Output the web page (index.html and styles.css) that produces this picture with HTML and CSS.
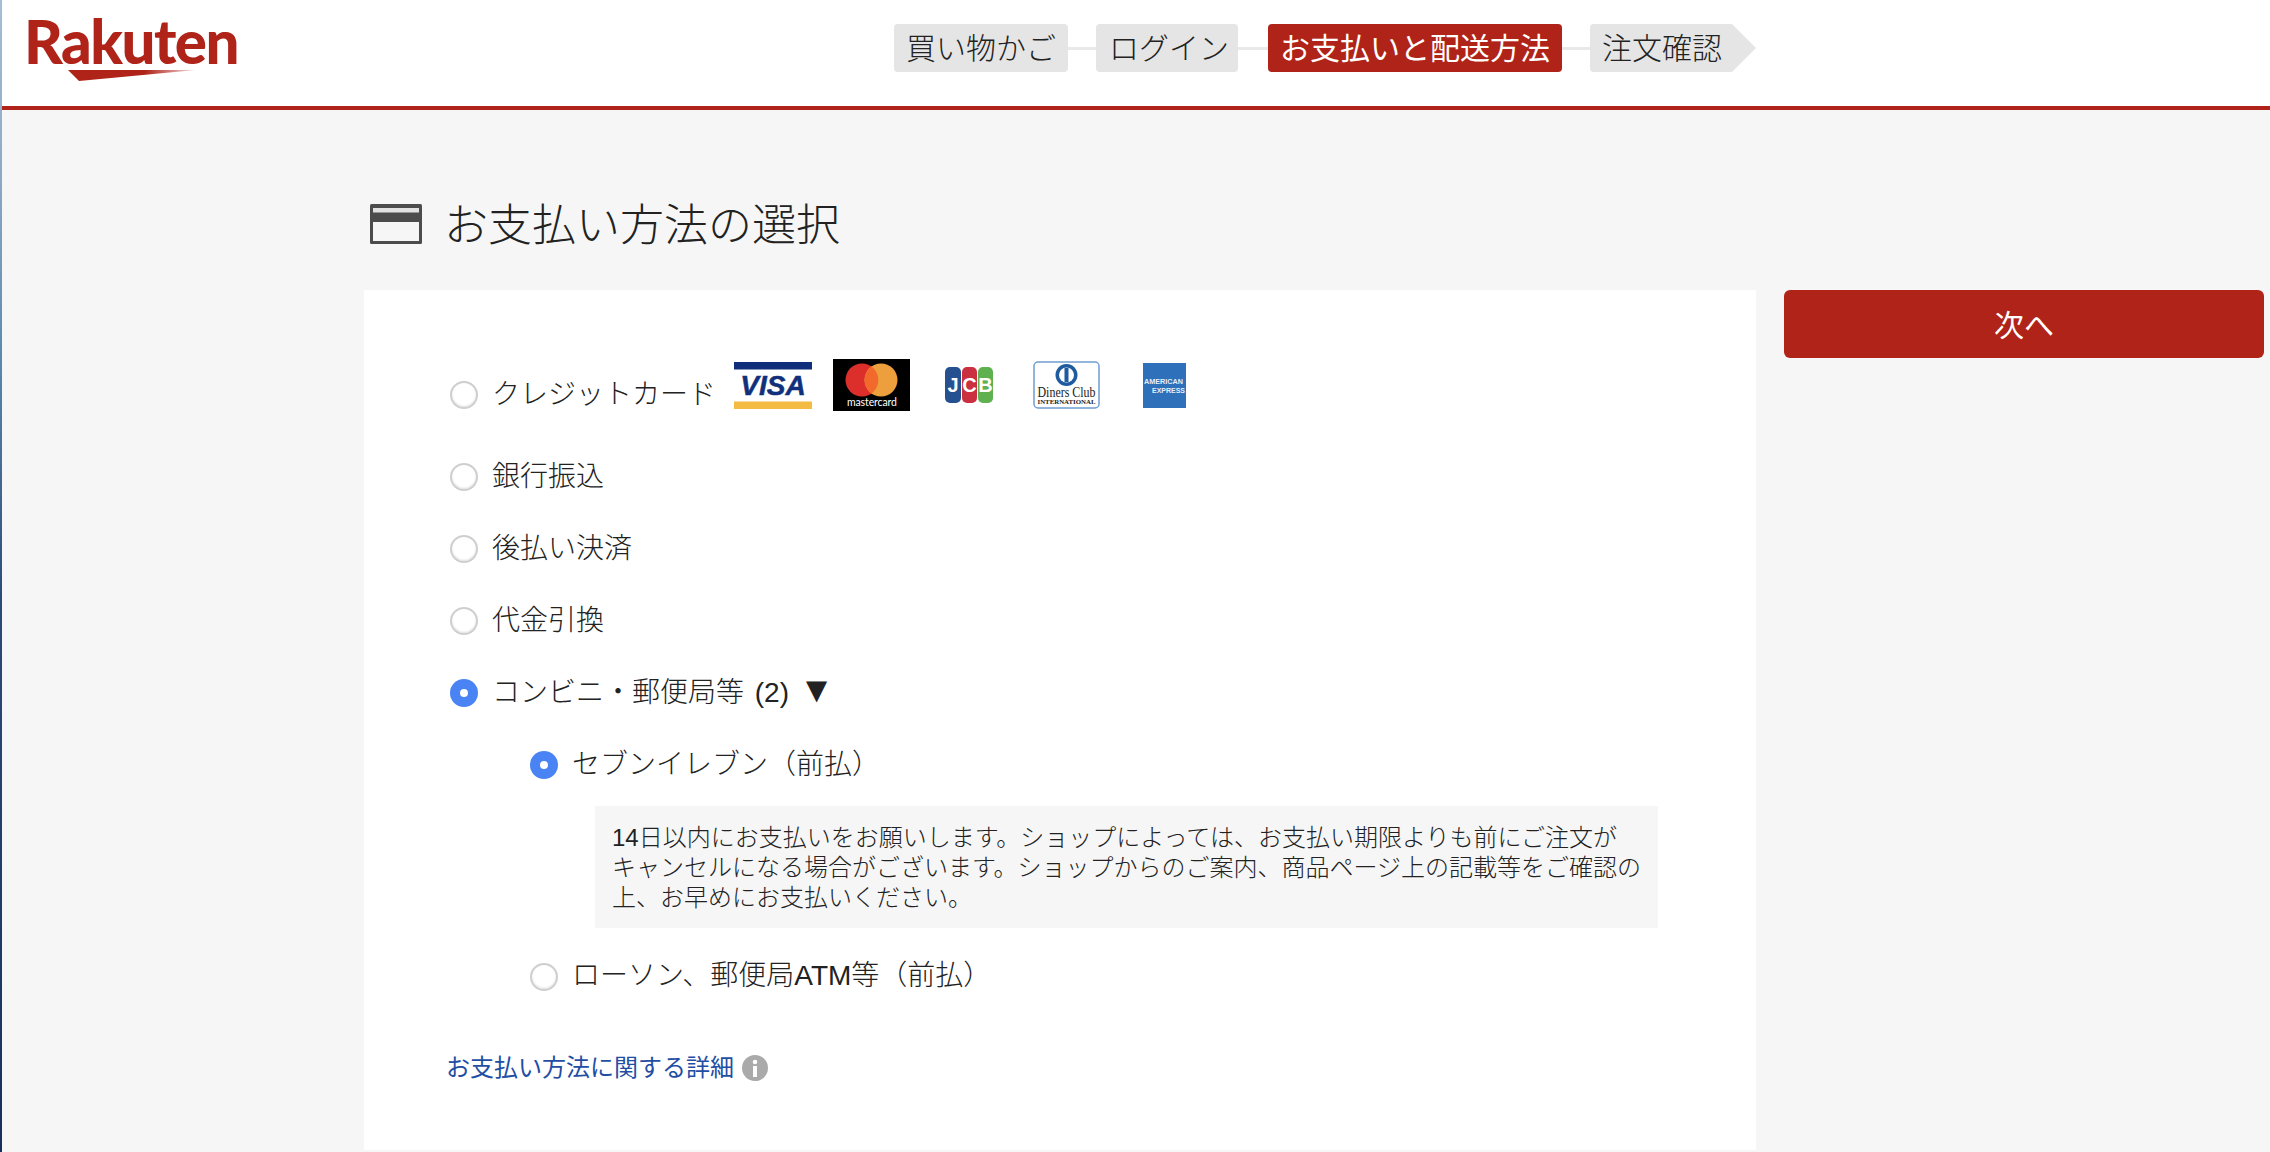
FILE: index.html
```html
<!DOCTYPE html>
<html lang="ja">
<head>
<meta charset="utf-8">
<title>お支払い方法の選択</title>
<link rel="stylesheet" href="styles.css">
</head>
<body>
<div class="page">
  <div class="edge"></div>
  <div class="frame">
    <header class="header">
      <div class="logo">
        <span class="logo-word">Rakuten</span>
        <svg class="logo-swoosh" width="170" height="12" viewBox="0 0 170 12">
          <defs><linearGradient id="sw" x1="0" x2="1" y1="0" y2="0"><stop offset="0.6" stop-color="#b02318"/><stop offset="1" stop-color="#b02318" stop-opacity="0.15"/></linearGradient></defs>
          <polygon points="0,0 128,0 11,11" fill="url(#sw)"/>
        </svg>
      </div>
      <nav class="steps">
        <span class="step">買い物かご</span>
        <span class="link-line"></span>
        <span class="step step-login">ログイン</span>
        <span class="link-line link-line-wide"></span>
        <span class="step step-active">お支払いと配送方法</span>
        <span class="link-line"></span>
        <span class="step step-last">注文確認</span>
      </nav>
    </header>
    <main class="main">
      <div class="title-row">
        <svg class="title-icon" width="52" height="40" viewBox="0 0 52 40">
          <rect x="0" y="0" width="52" height="40" rx="1.5" fill="#4c4c4c"/>
          <rect x="3" y="4" width="46" height="4.5" fill="#e2e2e2"/>
          <rect x="3" y="18" width="46" height="19" fill="#f6f6f6"/>
        </svg>
        <h1 class="title">お支払い方法の選択</h1>
      </div>
      <div class="columns">
        <section class="card">
          <div class="row row-card">
            <span class="radio radio-first"></span>
            <span class="label label-first">クレジットカード</span>
            <div class="brands">
              <svg class="brand-visa" width="78" height="47" viewBox="0 0 78 47">
                <rect width="78" height="7.5" fill="#0f2f7a"/>
                <rect y="39.5" width="78" height="7.5" fill="#f3bb42"/>
                <text x="39" y="33" text-anchor="middle" class="t-visa">VISA</text>
              </svg>
              <svg class="brand-mc" width="77" height="52" viewBox="0 0 77 52">
                <rect width="77" height="52" fill="#000"/>
                <circle cx="29" cy="21" r="16.5" fill="#dc2f2b"/>
                <circle cx="48" cy="21" r="16.5" fill="#ec9f3c"/>
                <path d="M38.500 7.600a16.500 16.500 0 0 1 0 26.800a16.500 16.500 0 0 1 0-26.800z" fill="#f1692b"/>
                <text x="14" y="47" textLength="50" class="t-mc">mastercard</text>
              </svg>
              <svg class="brand-jcb" width="48" height="36" viewBox="0 0 48 36">
                <rect width="16" height="36" rx="5" fill="#265191"/>
                <rect x="17" width="15" height="36" rx="5" fill="#cb3040"/>
                <rect x="33" width="15" height="36" rx="5" fill="#5fb04f"/>
                <text x="8" y="25" text-anchor="middle" class="t-jcb">J</text>
                <text x="24.500" y="25" text-anchor="middle" class="t-jcb">C</text>
                <text x="40.500" y="25" text-anchor="middle" class="t-jcb">B</text>
              </svg>
              <svg class="brand-diners" width="67" height="48" viewBox="0 0 67 48">
                <rect x="1" y="1" width="65" height="46" rx="4" fill="#fff" stroke="#6f9fd0" stroke-width="1.500"/>
                <circle cx="33.500" cy="14" r="11" fill="#1f5b9f"/>
                <circle cx="33.500" cy="14" r="7.500" fill="#fff"/>
                <rect x="31.500" y="7" width="4" height="14" fill="#1f5b9f"/>
                <text x="4.500" y="36" textLength="58" lengthAdjust="spacingAndGlyphs" class="t-diners">Diners Club</text>
                <text x="4.500" y="43" textLength="58" lengthAdjust="spacingAndGlyphs" class="t-intl">INTERNATIONAL</text>
              </svg>
              <svg class="brand-amex" width="43" height="45" viewBox="0 0 43 45">
                <rect width="43" height="45" fill="#2e71ba"/>
                <text x="1" y="21" textLength="39" lengthAdjust="spacingAndGlyphs" class="t-amex">AMERICAN</text>
                <text x="9" y="30" textLength="33" lengthAdjust="spacingAndGlyphs" class="t-amex">EXPRESS</text>
              </svg>
            </div>
          </div>
          <div class="options">
            <div class="row"><span class="radio"></span><span class="label">銀行振込</span></div>
            <div class="row"><span class="radio"></span><span class="label">後払い決済</span></div>
            <div class="row"><span class="radio"></span><span class="label">代金引換</span></div>
            <div class="row"><span class="radio radio-on"></span><span class="label label-spaced">コンビニ・郵便局等 (2) <span class="caret">▼</span></span></div>
            <div class="row row-sub"><span class="radio radio-on"></span><span class="label">セブンイレブン（前払）</span></div>
          </div>
          <p class="note">14日以内にお支払いをお願いします。ショップによっては、お支払い期限よりも前にご注文が<br>キャンセルになる場合がございます。ショップからのご案内、商品ページ上の記載等をご確認の<br>上、お早めにお支払いください。</p>
          <div class="row row-sub row-lawson"><span class="radio"></span><span class="label">ローソン、郵便局ATM等（前払）</span></div>
          <div class="detail">
            <a class="detail-link" href="#">お支払い方法に関する詳細</a>
            <svg class="info" width="26" height="26" viewBox="0 0 26 26">
              <circle cx="13" cy="13" r="13" fill="#aaa"/>
              <circle cx="13" cy="7" r="2.300" fill="#fff"/>
              <rect x="11" y="11" width="4" height="11" fill="#fff"/>
            </svg>
          </div>
        </section>
        <aside class="side">
          <button class="next" type="button">次へ</button>
        </aside>
      </div>
    </main>
  </div>
</div>
</body>
</html>
```
FILE: styles.css
```css
* { box-sizing: border-box; }
html, body { margin: 0; padding: 0; height: 1152px; overflow: hidden; }
body {
  font-family: "Liberation Sans", "Noto Sans CJK JP", sans-serif;
  font-weight: 300;
  color: #222;
  background: #f6f6f6;
}
.page { display: flex; height: 1152px; }
.edge {
  flex: 0 0 2px;
  background: linear-gradient(#a5bdd6 0, #8ca9c4 180px, #5a88ae 360px, #2c4a78 600px, #15305c 1152px);
}
.frame { flex: 1; min-width: 0; }

.header {
  display: flex;
  align-items: flex-start;
  height: 110px;
  padding: 24px 0 0 25px;
  background: #fff;
  border-bottom: 4px solid #b02318;
}
.logo { width: 210px; margin-top: -11px; position: relative; height: 70px; }
.logo-word {
  display: block;
  margin: -7px 0 0 -3px;
  font-family: "Lato", sans-serif;
  font-weight: 900;
  font-size: 60px;
  line-height: 70px;
  letter-spacing: -1.5px;
  color: #b02318;
}
.logo-swoosh { position: absolute; left: 41px; top: 57px; }

.steps { display: flex; align-items: center; margin-left: 657px; }
.step {
  display: block;
  height: 48px;
  padding: 0 12px;
  font-size: 30px;
  line-height: 50px;
  white-space: nowrap;
  background: #e5e5e5;
  border-radius: 4px;
  color: #222;
}
.step-login { padding: 0 9px 0 13px; }
.step-active { background: #b02318; color: #fff; font-weight: 400; }
.step-last { position: relative; padding-right: 10px; border-radius: 4px 0 0 4px; }
.step-last::after {
  content: "";
  position: absolute;
  left: 100%;
  top: 0;
  border-left: 24px solid #e5e5e5;
  border-top: 24px solid transparent;
  border-bottom: 24px solid transparent;
}
.link-line { display: block; width: 28px; height: 3px; background: #e9e9e9; }
.link-line-wide { width: 30px; }

.main { padding: 85px 6px 0 362px; }
.title-row { display: flex; align-items: center; gap: 22px; height: 60px; margin: 0 0 35px 6px; }
.title-icon { flex: none; margin-top: -3px; }
.title { margin: 2px 0 0; font-size: 44px; font-weight: 300; line-height: 60px; color: #222; }

.columns { display: flex; align-items: flex-start; gap: 28px; }
.card { flex: 0 0 1392px; height: 860px; padding: 69px 0 0 86px; background: #fff; }
.side { flex: 1; }
.next {
  display: block;
  width: 100%;
  height: 68px;
  padding: 0 0 3px;
  border: 0;
  border-radius: 6px;
  background: #b02318;
  color: #fff;
  font: inherit;
  font-size: 30px;
  font-weight: 400;
}

.row { display: flex; align-items: center; height: 34px; }
.radio {
  flex: none;
  width: 28px;
  height: 28px;
  margin-top: 6px;
  border-radius: 50%;
  border: 2px solid #cfcfcf;
  background: #fff;
  box-shadow: inset 0 -1px 2px rgba(0, 0, 0, 0.12);
}
.radio-on {
  position: relative;
  border: 0;
  background: #4a84f4;
  box-shadow: none;
}
.radio-on::after {
  content: "";
  position: absolute;
  left: 10px;
  top: 10px;
  width: 8px;
  height: 8px;
  border-radius: 50%;
  background: #fff;
}
.label { margin: 5px 0 0 14px; font-size: 28px; line-height: 34px; white-space: nowrap; }
.label-spaced { word-spacing: 3px; }
.caret { font-size: 36px; line-height: 28px; margin-left: -1px; }

.row-card { height: 52px; }
.radio-first { margin-top: 20px; }
.label-first { margin-top: 19px; }
.brands { display: flex; align-items: center; margin-left: 18px; height: 52px; }
.brand-mc { margin-left: 21px; }
.brand-jcb { margin-left: 35px; }
.brand-diners { margin-left: 40px; overflow: visible; }
.brand-amex { margin-left: 43px; overflow: visible; }

.options { display: flex; flex-direction: column; gap: 38px; margin-top: 46px; }
.row-sub { margin-left: 80px; }
.row-sub .label { margin-left: 14px; }
.note {
  margin: 27px 0 0 145px;
  width: 1063px;
  padding: 17px 12px 15px 17px;
  background: #f6f6f6;
  font-size: 24px;
  line-height: 30px;
  color: #222;
  white-space: nowrap;
}
.row-lawson { margin-top: 29px; }
.row-lawson .label { margin-top: 4px; }
.detail { display: flex; align-items: center; gap: 8px; margin: 60px 0 0 -4px; height: 34px; }
.detail-link { font-size: 24px; line-height: 34px; color: #1f4ea3; font-weight: 400; text-decoration: none; }
.info { flex: none; margin-top: 0; }

.t-visa { font: italic 700 28px "Liberation Sans", sans-serif; fill: #10307c; stroke: #10307c; stroke-width: 0.5px; }
.t-mc { font: 400 10.500px "Lato", sans-serif; fill: #fff; }
.t-jcb { font: 700 20px "Liberation Sans", sans-serif; fill: #fff; }
.t-diners { font: 400 15px "Liberation Serif", serif; fill: #222; }
.t-intl { font: 700 7px "Liberation Serif", serif; fill: #222; }
.t-amex { font: 700 8px "Liberation Sans", sans-serif; fill: #fff; fill-opacity: 0.9; }
```
